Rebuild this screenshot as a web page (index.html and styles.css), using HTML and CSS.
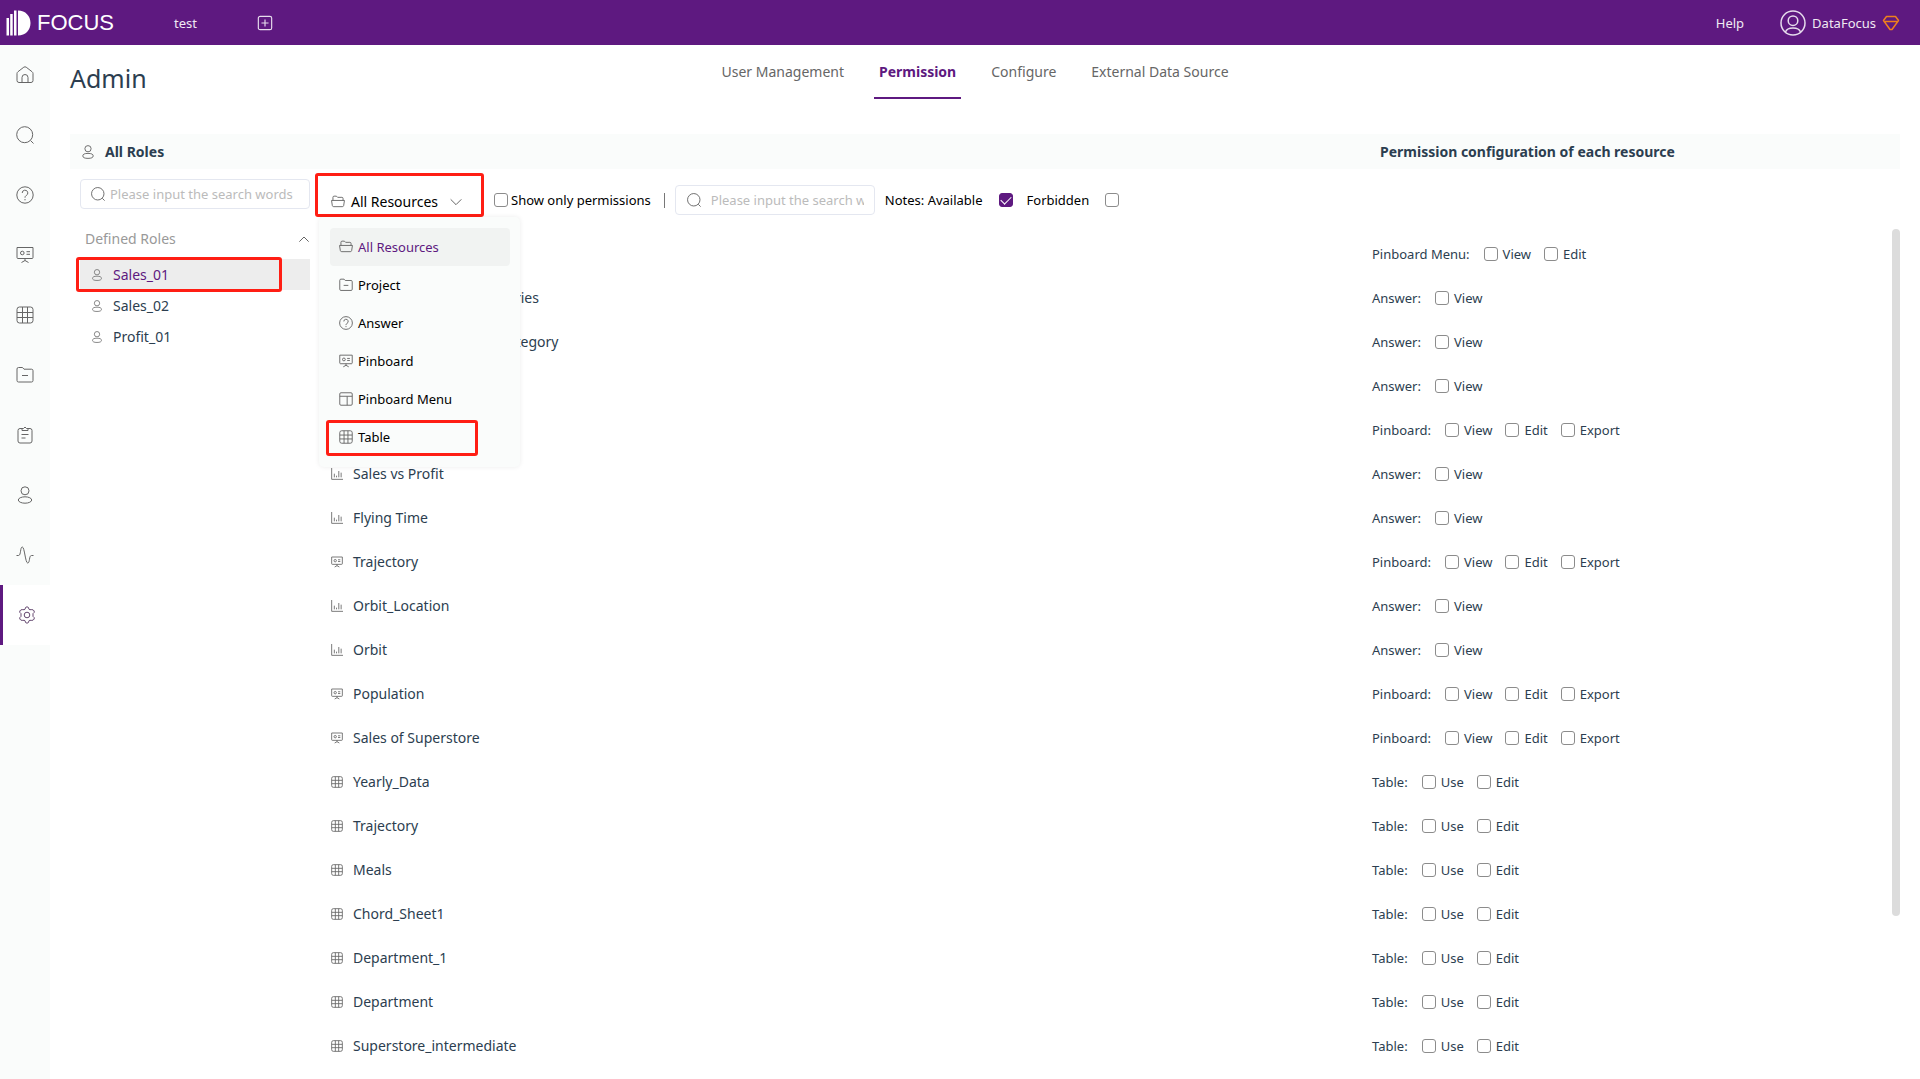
FILE: index.html
```
<!DOCTYPE html>
<html lang="en">
<head>
<meta charset="utf-8">
<title>Admin - Permission</title>
<link rel="stylesheet" href="styles.css">
</head>
<body>
<svg class="sprite" aria-hidden="true">
  <symbol id="i-home" viewBox="0 0 18 18"><path d="M3 16.500Q1 16.500 1 14.500V7.500Q1 6.500 2 5.700L7.800 1.200Q9 .4 10.200 1.200L16 5.700Q17 6.500 17 7.500V14.500Q17 16.500 15 16.500ZM6 16.500V11.500a3 3 0 0 1 6 0V16.500"/></symbol>
  <symbol id="i-search" viewBox="0 0 18 18"><circle cx="8.700" cy="8.700" r="8"/><path d="M14.500 14.500L17.500 17.500"/></symbol>
  <symbol id="i-help" viewBox="0 0 18 18"><circle cx="9" cy="9" r="8.200"/><path d="M6.200 7a2.800 2.800 0 1 1 4 2.500Q9 10.200 9 11.700M9 13v1.300"/></symbol>
  <symbol id="i-board" viewBox="0 0 18 18"><path d="M1 1.500H17V11.500Q17 12.500 16 12.500H2Q1 12.500 1 11.500ZM9 12.500V14.500M5.500 16.500L9 14.500L12.500 16.500M10.500 5.700H14M10.500 8.300H14"/><circle cx="6.300" cy="7" r="1.800"/></symbol>
  <symbol id="i-grid" viewBox="0 0 18 18"><rect x="1" y="1" width="16" height="16" rx="2.500"/><path d="M6.500 1V17M11.500 1V17M1 6.500H17M1 11.500H17"/></symbol>
  <symbol id="i-folder" viewBox="0 0 18 18"><path d="M1 3Q1 1.500 2.500 1.500H6.500L8 3.200H15.500Q17 3.200 17 4.700V14.500Q17 16 15.500 16H2.500Q1 16 1 14.500ZM6 9.500H12"/></symbol>
  <symbol id="i-clip" viewBox="0 0 18 18"><path d="M6 2.500H4Q2 2.500 2 4.500V15Q2 17 4 17H14Q16 17 16 15V4.500Q16 2.500 14 2.500H12M6 2.500V4.500H12V2.500L10.500 2.500Q9 -.5 7.500 2.500ZM5.500 8.500H12.500M5.500 12H9.500"/></symbol>
  <symbol id="i-user" viewBox="0 0 18 18"><circle cx="9" cy="4.800" r="4"/><ellipse cx="9" cy="14" rx="6.700" ry="3.200"/></symbol>
  <symbol id="i-pulse" viewBox="0 0 18 18"><path d="M.5 9.500H2.500C5.200 9.500 4 1 6.300 1S9.300 17 11.700 17S12.800 9.500 15.500 9.500H17.500"/></symbol>
  <symbol id="i-gear" viewBox="0 0 18 18"><circle cx="9" cy="9" r="2.800"/><path d="M9 .8Q10.800 .8 11 3.300Q11.700 4 13.200 3.600Q15.500 3.400 16.200 5Q16.800 6.500 15 7.600V10.400Q16.800 11.500 16.200 13Q15.500 14.600 13.200 14.400Q11.700 14 11 14.700Q10.800 17.200 9 17.200Q7.200 17.200 7 14.700Q6.300 14 4.800 14.400Q2.500 14.600 1.800 13Q1.200 11.500 3 10.400V7.600Q1.200 6.500 1.800 5Q2.500 3.400 4.800 3.600Q6.300 4 7 3.300Q7.200 .8 9 .8Z"/></symbol>
  <symbol id="i-open" viewBox="0 0 18 18"><path d="M2.500 7V3Q2.500 1.500 4 1.500H7L8.500 3H14Q15.500 3 15.500 4.500V7M.7 7H17.300L16.300 13.500Q16 15 14.500 15H3.500Q2 15 1.700 13.500Z"/></symbol>
  <symbol id="i-menu" viewBox="0 0 18 18"><rect x="1" y="1" width="16" height="16" rx="1.500"/><path d="M1 5.500H17M10.500 5.500V17"/></symbol>
  <symbol id="i-chart" viewBox="0 0 18 18"><path d="M1 0V17H18M5 14V8.500M8.300 14V11.500M11.700 14V4.500M15.200 14V7"/></symbol>
  <symbol id="i-down" viewBox="0 0 18 18"><path d="M1 5L9 13L17 5"/></symbol>
  <symbol id="i-up" viewBox="0 0 18 18"><path d="M2 13L9 6L16 13"/></symbol>
  <symbol id="i-plus" viewBox="0 0 18 18"><rect x="1.500" y="1.500" width="15" height="15" rx="2"/><path d="M9 5V13M5 9H13"/></symbol>
  <symbol id="i-avatar" viewBox="0 0 26 26"><circle cx="13" cy="13" r="12"/><circle cx="13" cy="10.700" r="4.800"/><path d="M5.500 22C6.500 19 9 18 13 18S19.500 19 20.500 22"/></symbol>
  <symbol id="i-gem" viewBox="0 0 18 16"><path d="M4.500 1.500H13.500L16.500 5.500L10 14.500H8L1.500 5.500ZM3 6.500H15" stroke-linejoin="round"/></symbol>
</svg>

<header class="topbar">
  <a class="brand" href="#" aria-label="Focus">
    <svg class="brand-mark" viewBox="0 0 25 26"><path d="M.5 8h2.500v17.500H.5zM4.200 4h2.500v21.500H4.200zM8 .5h2.500v25H8zM12 .5c7.500 0 12.500 5.500 12.500 12.500S19.500 25.500 12 25.500z"/></svg>
    <span>FOCUS</span>
  </a>
  <a class="top-link" href="#">test</a>
  <button class="icon-button" type="button" aria-label="Add"><svg class="ico"><use href="#i-plus"/></svg></button>
  <a class="top-link help" href="#">Help</a>
  <button class="account" type="button">
    <svg class="avatar"><use href="#i-avatar"/></svg>
    <span>DataFocus</span>
    <svg class="gem"><use href="#i-gem"/></svg>
  </button>
</header>

<div class="shell">
  <nav class="sidebar" aria-label="Main">
    <a href="#" aria-label="Home"><svg class="ico"><use href="#i-home"/></svg></a>
    <a href="#" aria-label="Search"><svg class="ico"><use href="#i-search"/></svg></a>
    <a href="#" aria-label="Answers"><svg class="ico"><use href="#i-help"/></svg></a>
    <a href="#" aria-label="Pinboards"><svg class="ico"><use href="#i-board"/></svg></a>
    <a href="#" aria-label="Tables"><svg class="ico"><use href="#i-grid"/></svg></a>
    <a href="#" aria-label="Projects"><svg class="ico"><use href="#i-folder"/></svg></a>
    <a href="#" aria-label="Tasks"><svg class="ico"><use href="#i-clip"/></svg></a>
    <a href="#" aria-label="Users"><svg class="ico"><use href="#i-user"/></svg></a>
    <a href="#" aria-label="Activity"><svg class="ico"><use href="#i-pulse"/></svg></a>
    <a class="active" href="#" aria-label="Admin"><svg class="ico"><use href="#i-gear"/></svg></a>
  </nav>

  <main class="page">
    <div class="page-head">
      <h1>Admin</h1>
      <nav class="tabs" aria-label="Admin sections">
        <a href="#">User Management</a>
        <a class="current" href="#">Permission</a>
        <a href="#">Configure</a>
        <a href="#">External Data Source</a>
      </nav>
    </div>

    <div class="panel-head">
      <svg class="ico small"><use href="#i-user"/></svg>
      <h2>All Roles</h2>
      <h2 class="perm-title">Permission configuration of each resource</h2>
    </div>

    <div class="panel-body">
      <aside class="roles">
        <div class="search-box">
          <svg class="ico small"><use href="#i-search"/></svg>
          <input type="text" aria-label="Search roles" placeholder="Please input the search words">
        </div>
        <div class="group-head"><span>Defined Roles</span><svg class="ico tiny"><use href="#i-up"/></svg></div>
        <ul class="role-list">
          <li class="selected"><svg class="ico mini"><use href="#i-user"/></svg>Sales_01<span class="mark"></span></li>
          <li><svg class="ico mini"><use href="#i-user"/></svg>Sales_02</li>
          <li><svg class="ico mini"><use href="#i-user"/></svg>Profit_01</li>
        </ul>
      </aside>

      <section class="resources">
        <div class="toolbar">
          <div class="picker">
            <button class="picker-button" type="button" aria-expanded="true">
              <svg class="ico small"><use href="#i-open"/></svg>
              <span>All Resources</span>
              <svg class="ico tiny"><use href="#i-down"/></svg>
            </button>
            <ul class="menu">
              <li class="chosen"><svg class="ico small"><use href="#i-open"/></svg>All Resources</li>
              <li><svg class="ico small"><use href="#i-folder"/></svg>Project</li>
              <li><svg class="ico small"><use href="#i-help"/></svg>Answer</li>
              <li><svg class="ico small"><use href="#i-board"/></svg>Pinboard</li>
              <li><svg class="ico small"><use href="#i-menu"/></svg>Pinboard Menu</li>
              <li><svg class="ico small"><use href="#i-grid"/></svg>Table<span class="mark"></span></li>
            </ul>
          </div>
          <label class="only"><input type="checkbox">Show only permissions</label>
          <span class="divider"></span>
          <div class="search-box">
            <svg class="ico small"><use href="#i-search"/></svg>
            <input type="text" aria-label="Search resources" placeholder="Please input the search words">
          </div>
          <label class="note">Notes: Available<input type="checkbox" checked></label>
          <label class="note">Forbidden<input type="checkbox"></label>
        </div>
        <div class="list">
          <table>
            <tbody id="rows"></tbody>
          </table>
          <div class="scroll"></div>
        </div>
      </section>
    </div>
  </main>
</div>
<script src="rows.js"></script>
</body>
</html>
```
FILE: rows.js
```
const kinds = {
  menu: ["i-menu", "Pinboard Menu", ["View", "Edit"]],
  answer: ["i-chart", "Answer", ["View"]],
  pinboard: ["i-board", "Pinboard", ["View", "Edit", "Export"]],
  table: ["i-grid", "Table", ["Use", "Edit"]]
};

const resources = [
  ["menu", ""],
  ["answer", "Sales for Product Categories"],
  ["answer", "Sales and Quantity by Category"],
  ["answer", ""],
  ["pinboard", ""],
  ["answer", "Sales vs Profit"],
  ["answer", "Flying Time"],
  ["pinboard", "Trajectory"],
  ["answer", "Orbit_Location"],
  ["answer", "Orbit"],
  ["pinboard", "Population"],
  ["pinboard", "Sales of Superstore"],
  ["table", "Yearly_Data"],
  ["table", "Trajectory"],
  ["table", "Meals"],
  ["table", "Chord_Sheet1"],
  ["table", "Department_1"],
  ["table", "Department"],
  ["table", "Superstore_intermediate"]
];

document.getElementById("rows").innerHTML = resources.map(([kind, name]) => {
  const [icon, label, actions] = kinds[kind];
  const boxes = actions.map(a => `<label><input type="checkbox">${a}</label>`).join("");
  return `<tr>
    <td><div class="name"><svg class="ico mini"><use href="#${icon}"/></svg>${name}</div></td>
    <td class="perm-cell"><div class="perms"><span>${label}:</span>${boxes}</div></td>
  </tr>`;
}).join("");
```
FILE: styles.css
```
* { box-sizing: border-box; }

body {
  margin: 0;
  height: 100vh;
  display: flex;
  flex-direction: column;
  overflow: hidden;
  font: 14px/20px "Noto Sans", "Open Sans", sans-serif;
  color: #2c3e50;
  background: #fff;
}

a { color: inherit; text-decoration: none; }
h1, h2, ul { margin: 0; padding: 0; font-weight: 400; list-style: none; }
button { font: inherit; color: inherit; background: none; border: 0; padding: 0; }

.sprite { position: absolute; width: 0; height: 0; }
.ico { width: 18px; height: 18px; flex: none; fill: none; stroke: #666; stroke-width: 1; }
.ico.small { width: 14px; height: 14px; stroke-width: 1.2; }
.ico.tiny { width: 12px; height: 12px; stroke-width: 1.5; }
.ico.mini { width: 12px; height: 12px; stroke-width: 1.3; }

input[type="checkbox"] {
  appearance: none;
  flex: none;
  width: 14px;
  height: 14px;
  margin: 0;
  border: 1px solid #8c8c8c;
  border-radius: 3px;
  background: #fff;
}
input[type="checkbox"]:checked {
  display: grid;
  place-items: center;
  background: #5e1980;
  border-color: #5e1980;
}
input[type="checkbox"]:checked::before {
  content: "";
  width: 9px;
  height: 5px;
  border: solid #fff;
  border-width: 0 0 1px 1px;
  rotate: -45deg;
  translate: 0 -1px;
}

.topbar {
  flex: none;
  height: 45px;
  display: flex;
  align-items: center;
  padding: 0 20px 0 6px;
  background: #5e1980;
  color: #f0eaf3;
  font-size: 13px;
}
.brand { display: flex; align-items: center; gap: 6px; width: 168px; color: #fff; font: 22px/26px "Liberation Sans", Arial, sans-serif; }
.brand-mark { width: 25px; height: 26px; fill: #fff; }
.icon-button { display: flex; margin-left: 60px; }
.icon-button .ico { width: 16px; height: 16px; stroke: #e6dcec; stroke-width: 1.3; }
.help { margin-left: auto; }
.account { display: flex; align-items: center; gap: 6px; margin-left: 36px; }
.avatar { width: 26px; height: 26px; fill: none; stroke: #e6dcec; stroke-width: 1.5; }
.gem { width: 18px; height: 16px; fill: none; stroke: #ee7f1d; stroke-width: 1.5; }

.shell { flex: 1; min-height: 0; display: flex; }

.sidebar { flex: none; width: 50px; background: #fafcfb; }
.sidebar a { display: flex; align-items: center; justify-content: center; height: 60px; }
.sidebar .active { background: #fff; border-left: 3px solid #5e1980; }
.sidebar .active .ico { stroke: #64476f; }

.page { flex: 1; min-width: 0; display: flex; flex-direction: column; padding: 0 20px; }

.page-head { flex: none; display: grid; grid-template-columns: 1fr auto 1fr; height: 89px; padding-right: 20px; }
h1 { font-size: 25px; line-height: 66px; }
.tabs { display: flex; gap: 25px; height: 54px; color: #666; }
.tabs a { padding: 0 5px; line-height: 54px; }
.tabs .current { color: #5e1980; font-weight: 700; border-bottom: 2px solid #5e1980; }

.panel-head { flex: none; display: flex; align-items: center; gap: 10px; height: 35px; padding-left: 11px; background: #fafcfb; }
.panel-head h2 { font-size: 14px; font-weight: 700; }
.panel-head .perm-title { margin-left: auto; width: 520px; }

.panel-body { flex: 1; min-height: 0; display: flex; gap: 9px; }

.search-box { display: flex; align-items: center; height: 30px; border: 1px solid #e4e7f0; border-radius: 4px; padding: 0 10px; gap: 5px; }
.search-box input { flex: 1; min-width: 0; border: 0; outline: 0; padding: 0; font: inherit; background: none; }
.search-box input::placeholder { color: #bbb; opacity: 1; }

.roles { flex: none; width: 240px; padding: 10px 0 0 10px; }
.roles .search-box { font-size: 13px; }
.group-head { display: flex; align-items: center; justify-content: space-between; margin-top: 10px; height: 40px; padding-left: 5px; color: #999; }
.role-list li { position: relative; display: flex; align-items: center; gap: 10px; height: 31px; padding-left: 11px; }
.role-list .ico { stroke: #777; }
.role-list .selected { background: #ededed; color: #5e1980; }

/* Highlight frames laid over the role, the picker and the menu entry */
.mark, .picker-button::after { content: ""; position: absolute; border: 3px solid #ff1e14; border-radius: 3px; }
.role-list .mark { inset: -2px 28px -2px -4px; }
.menu .mark { inset: 2px 32px 0 -4px; }
.picker-button::after { inset: 2px 0 0 -4px; }

.resources { flex: 1; min-width: 0; display: flex; flex-direction: column; }
.toolbar { flex: none; display: flex; align-items: center; height: 60px; padding-top: 2px; font-size: 13px; color: #000; }
.picker { position: relative; align-self: flex-start; width: 165px; height: 46px; }
.picker-button { position: relative; display: flex; align-items: center; gap: 6px; width: 100%; height: 46px; padding: 16px 0 0 12px; font-size: 14px; line-height: 20px; }
.picker-button .tiny { margin-left: 6px; }
.menu { position: absolute; z-index: 2; top: 46px; left: 0; width: 201px; padding: 11px 10px 11px 11px; border-radius: 5px; background: #fafcfb; box-shadow: 0 0 5px rgba(0, 0, 0, .08); }
.menu li { position: relative; display: flex; align-items: center; gap: 5px; height: 38px; padding-left: 9px; border-radius: 4px; }
.menu .chosen { background: #f1f3f2; color: #5e1980; }

.only { display: flex; align-items: center; gap: 3px; margin-left: 10px; }
.divider { width: 1px; height: 15px; margin: 0 10px 0 13px; background: #777; }
.toolbar .search-box { width: 200px; padding-left: 11px; gap: 10px; }
.note { display: flex; align-items: center; gap: 16px; margin-left: 10px; }
.note + .note { margin-left: 14px; }

.list { flex: 1; min-height: 0; overflow: hidden; display: flex; }
table { flex: 1; align-self: flex-start; margin-top: 3px; border-collapse: collapse; }
td { height: 44px; padding: 0; }
.name { display: flex; align-items: center; gap: 10px; padding-left: 12px; }
.perm-cell { width: 520px; font-size: 13px; }
.perms { display: flex; align-items: center; gap: 13px; }
.perms span { margin-right: 1px; }
.perms label { display: flex; align-items: center; gap: 5px; }
.scroll { flex: none; width: 8px; height: calc(81% - 2px); border-radius: 4px; background: #dcdcdc; }
```
